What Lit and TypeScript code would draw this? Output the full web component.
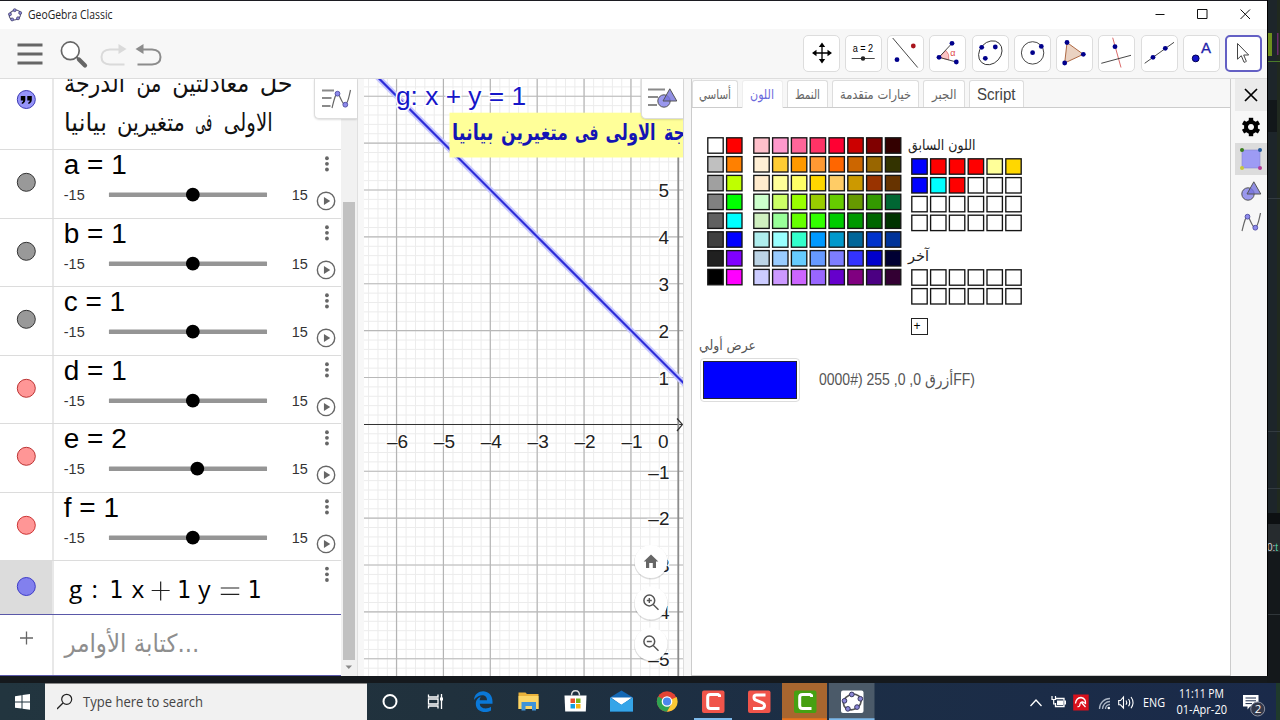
import { LitElement, html, svg, css } from "lit";
import { customElement } from "lit/decorators.js";

const AR = "'DejaVu Sans', sans-serif";
const SEG = "'Open Sans', 'Noto Sans', sans-serif";
const ARIAL = "'Liberation Sans', 'DejaVu Sans', sans-serif";

// A line of text fitted to a known width.
const line = (t: string, w: number, h: number, base: number, size: number, fill = "#000", font = AR, weight = 400) => html`
  <svg class="ln" width=${w} height=${h}><text x="0" y=${base} textLength=${w} lengthAdjust="spacingAndGlyphs"
    font-family=${font} font-size=${size} font-weight=${weight} fill=${fill}>${t}</text></svg>`;

const word = (t: string, x: number, y: number, w: number, size: number, fill: string, weight = 400) => svg`
  <text x=${x} y=${y} textLength=${w} lengthAdjust="spacingAndGlyphs" font-family=${AR} font-size=${size} font-weight=${weight} fill=${fill}>${t}</text>`;

const dot = (x: number, y: number, r = 2.4, fill = "#00008b") => svg`<circle cx=${x} cy=${y} r=${r} fill=${fill}/>`;
const seg = (a: number, b: number, c: number, d: number, stroke = "#333", w = 0.9) => svg`<line x1=${a} y1=${b} x2=${c} y2=${d} stroke=${stroke} stroke-width=${w}/>`;

const pentagon = (s: number, ring: string) => svg`
  <g transform="scale(${s})"><ellipse cx="0" cy="0" rx="9.3" ry="7.6" transform="rotate(-25)" fill="none" stroke=${ring} stroke-width="1.7"/>
  ${[[-0.5, -7.7], [8.2, -3.3], [4.8, 5.2], [-4.5, 7], [-8, -1.2]].map(([x, y]) => svg`<circle cx=${x} cy=${y} r="2.4" fill="#8b86d6" stroke="#34345c" stroke-width="1"/>`)}</g>`;

const tools = [
  svg`<path d="M19 9V27M10.500 18H27.500" stroke="#000" stroke-width="1.300"/><path d="M19 7.500l3.200 4.500h-6.400zM19 28.500l3.200-4.500h-6.400zM9 18l4.500-3.200v6.400zM29 18l-4.500-3.200v6.400z"/>`,
  svg`<text x="7.700" y="17" font-size="11.500" textLength="20.500" lengthAdjust="spacingAndGlyphs" font-family=${ARIAL}>a = 2</text>${seg(6.7, 23.5, 29.7, 23.5)}${dot(18, 23.5, 2.2, "#222")}`,
  svg`${seg(5.7, 3, 30.7, 32.5)}${dot(10, 24.7)}${dot(26.3, 11, 2.4, "#a8141c")}`,
  svg`<path d="M10 22.300L17 15.500A10 10 0 0 1 19.700 24.800Z" fill="#fbc4c4" stroke="#d66" stroke-width=".7"/>${seg(10, 22.3, 23, 8.3)}${seg(10, 22.3, 27.3, 27)}${dot(10, 22.3)}${dot(23, 8.3)}${dot(27.3, 27)}<text x="21.300" y="21" font-size="9" fill="#e04848" font-family=${ARIAL}>α</text>`,
  svg`<ellipse cx="18.300" cy="17.800" rx="13" ry="10.600" transform="rotate(-48 18.300 17.800)" fill="none" stroke="#333" stroke-width=".9"/>${dot(9.7, 12.3)}${dot(23.3, 12)}${dot(13.3, 23.3)}`,
  svg`<circle cx="18.600" cy="17.900" r="11.200" fill="none" stroke="#333" stroke-width=".9"/>${dot(18.6, 17.7)}${dot(27.3, 11.4)}`,
  svg`<path d="M11 7.500L27.300 19.300L8.700 28Z" fill="#ead2c2" stroke="#a55a32" stroke-width=".9"/>${dot(11, 7.5)}${dot(27.3, 19.3)}${dot(8.7, 28)}`,
  svg`${seg(14.7, 2.7, 23, 32.5, "#d65a5a")}${seg(3.3, 28.3, 33, 20.3)}${dot(17, 11.7)}`,
  svg`${seg(3.7, 28.3, 33, 7.3)}${dot(12, 22.3)}${dot(24.3, 13.3)}`,
  svg`<circle cx="12.700" cy="23.400" r="3.400" fill="#1414c8" stroke="#000050"/><text x="18" y="17.500" font-size="15" fill="#2222aa" stroke="#2222aa" stroke-width=".3" font-family=${ARIAL}>A</text>`,
  svg`<path d="M12.500 8.500V24.200L16.300 20.700L19 27.200Q20.700 27.500 21.300 26.200L18.700 20H23.700Z" fill="#fff" stroke="#444" stroke-width="1" stroke-linejoin="round"/>`,
];

const shapes = svg`<circle cx="7" cy="13" r="6.200" fill="#9a98ee" stroke="#555" stroke-width="1"/><path d="M12.800 .8L19.800 13H6Z" fill="#7673dc" fill-opacity=".8" stroke="#555" stroke-width="1"/>`;
const curve = svg`<path d="M1 18C3.500 8 4.500 3.500 6.500 3.500S11 14.500 14 14.500S18 6 19.500 0" fill="none" stroke="#666" stroke-width="1.200"/><circle cx="6.500" cy="3.700" r="2.400" fill="#8d8aec" stroke="#4d4ba0" stroke-width=".9"/><circle cx="14.300" cy="14.700" r="2.400" fill="#8d8aec" stroke="#4d4ba0" stroke-width=".9"/>`;
const bars = svg`<path d="M0 1.500H12M0 9H9.500M0 17H8.500" stroke="#8a8a8a" stroke-width="1.900"/>`;
const barsWide = svg`<path d="M0 1.500H17M0 9H10M0 17H9" stroke="#8a8a8a" stroke-width="1.900"/>`;

const sliders = [
  ["a = 1", 193, "#999", "#333"], ["b = 1", 193, "#999", "#333"], ["c = 1", 193, "#999", "#333"],
  ["d = 1", 193, "#ff9696", "#b33"], ["e = 2", 197.5, "#ff9696", "#b33"], ["f = 1", 193, "#ff9696", "#c33"],
] as [string, number, string, string][];

const base = "fff f00 c0c0c0 ff8000 a0a0a0 bfff00 808080 0f0 606060 0ff 404040 00f 202020 8000ff 000 f0f".split(" ");
const palette = ("ffc0cb ff99cc ff6699 ff3366 ff0033 cc0000 800000 330000 ffefd5 ffcc33 ff9900 ff9933 ff6600 cc6600 996600 333300 " +
  "ffebcd ffff99 ffff66 ffd700 ffcc66 cc9900 993300 663300 ccffcc ccff66 99ff00 99cc00 66cc00 669900 339900 006633 " +
  "d0f0c0 99ff99 66ff00 33ff00 00cc00 009900 006600 003300 afeeee 99ffff 33ffcc 0099ff 0099cc 006699 0033cc 003399 " +
  "bcd4e6 99ccff 66ccff 6699ff 7d7dff 3333ff 0000cc 000033 ccccff cc99ff cc66ff 9966ff 6600cc 800080 4b0082 330033").split(" ");
const recent = "00f f00 f00 f00 ffff99 ffd700 00f 0ff f00".split(" ").concat(Array(15).fill("fff"));
const others = Array(12).fill("fff");

const swatches = (c: string[], cols: number) => {
  const rows = c.length / cols;
  return html`<svg class="ln" width=${cols * 18.8} height=${rows * 18.8}>${c.map((v, i) => svg`
    <rect x=${(i % cols) * 18.8 + 0.8} y=${Math.floor(i / cols) * 18.8 + 0.8} width="15.400" height="15.400" fill=${"#" + v} stroke="#151515" stroke-width="1.350"/>`)}</svg>`;
};

const range = (a: number, b: number) => Array.from({ length: b - a + 1 }, (_, i) => a + i);
const X0 = 678, Y0 = 424.4, U = 46.88;

const taskIcons = [
  svg`<circle cx="23" cy="18.500" r="6.500" fill="none" stroke="#fff" stroke-width="2"/>`,
  svg`<path d="M15.500 11.500V14H25V11.500M15.500 25.500V23H25V25.500M15.500 16H25V21H15.500ZM28.500 11V26" fill="none" stroke="#fff" stroke-width="1.300"/><rect x="27" y="14.500" width="3" height="3" fill="#fff"/>`,
  svg`<path d="M15 17C16 5 33.500 5.500 33.500 18.500V20.800H20.800C21.200 26.500 28.500 26.300 32 23.800V27.500C26 31 16.500 28.500 16.800 20.500C17 16.500 19.500 14.500 22 13.500C20.900 15 20.700 16.500 20.700 17.300H28C28.300 10.500 19.500 10.500 15 17Z" fill="#0a78d8"/>`,
  svg`<path d="M13.500 9.500h7l1.500 1.500H33.500V26H13.500Z" fill="#e9b23b"/><path d="M13.500 13H33.500V26H13.500Z" fill="#fcd667"/><path d="M16.500 19H31V27.500H27V23H20.500V27.500H16.500Z" fill="#3f93d8"/>`,
  svg`<path d="M12.500 12.500H34.500L33.800 28.500H13.200Z" fill="#fff"/><path d="M19.500 12.500C19.500 6 27.500 6 27.500 12.500" fill="none" stroke="#ddd" stroke-width="1.500"/><path d="M18.500 15.500h4.500v4.500h-4.500z" fill="#e5502c"/><path d="M24 15.500h4.500v4.500H24z" fill="#7cb518"/><path d="M18.500 21h4.500v4.500h-4.500z" fill="#129fe4"/><path d="M24 21h4.500v4.500H24z" fill="#f7b50f"/>`,
  svg`<path d="M12 14.500L23.500 7.500L35 14.500V28.500H12Z" fill="#1267b4"/><path d="M13 14.500H34L23.500 22Z" fill="#fff"/><path d="M12 14.500L23.500 22L12 28.500ZM35 14.500V28.500H12L23.500 21.500Z" fill="#35a5e8"/>`,
  svg`<circle cx="23" cy="18.500" r="10.200" fill="#e34335"/><path d="M23 18.500L14.200 13.400A10.200 10.200 0 0 0 23 28.700L27.400 21Z" fill="#2ea452"/><path d="M23 18.500L32.600 14A10.200 10.200 0 0 1 23 28.700L27.400 21Z" fill="#fcc934"/><circle cx="23" cy="18.500" r="4.700" fill="#4b87ee" stroke="#fff" stroke-width="1.300"/>`,
  svg`<rect x="12" y="7.500" width="22.500" height="22.500" rx="2" fill="#f0544a"/><path d="M29.500 14V12.500L28 11.500H20.500Q17.700 11.500 17.700 14V22.500Q17.700 25.500 20.500 25.500H29.500" fill="none" stroke="#fff" stroke-width="3"/><path d="M4 36H42" stroke="#7db9ea" stroke-width="2"/>`,
  svg`<rect x="12" y="7.500" width="22.500" height="22.500" rx="2" fill="#f0544a"/><path d="M29.500 12H20.500Q18 12 18 14.200T20 17.200L26.500 19.900Q28.800 21 28.500 23T26 25.400H17" fill="none" stroke="#fff" stroke-width="3"/>`,
  svg`<rect x="0" y="0" width="45" height="37" fill="#a8662f"/><rect x="12" y="7.500" width="22.500" height="22.500" rx="2" fill="#46a012"/><path d="M29.500 14V12.500L28 11.500H20.500Q17.700 11.500 17.700 14V22.500Q17.700 25.500 20.500 25.500H29.500" fill="none" stroke="#fff" stroke-width="3"/><path d="M0 36.200H45" stroke="#e8731c" stroke-width="1.800"/>`,
  svg`<rect x="0" y="0" width="45.500" height="37" fill="#4b5a69"/><rect x="12" y="7.500" width="22.500" height="22.500" rx="2" fill="#fff"/><g transform="translate(23.300 19)">${pentagon(0.98, "#555")}</g><path d="M0 36.200H45.500" stroke="#7db9ea" stroke-width="1.800"/>`,
];

@customElement("app-root")
export class AppRoot extends LitElement {
  static styles = css`
    :host { display: block; width: 1280px; height: 720px; overflow: hidden; font-family: "Liberation Sans", "DejaVu Sans", sans-serif; }
    * { box-sizing: border-box; }
    svg { display: block; flex: none; }
    .ln { overflow: visible; }
    .desk { display: flex; flex-direction: column; height: 720px; background: #15191d; }
    .upper { display: flex; height: 683px; }
    .win { width: 1267px; height: 676px; display: flex; flex-direction: column; background: #f7f7f7; border-top: 1px solid #1c1c22; }
    .title { height: 28px; background: #fff; display: flex; align-items: center; padding-left: 7px; gap: 5px; }
    .title .grow, .bar .grow { flex: 1; }
    .bar { height: 50px; display: flex; align-items: center; border-bottom: 1px solid #ddd; padding-right: 5px; background: #f7f7f7; }
    .tools { display: flex; gap: 5.26px; }
    .tool { width: 37px; height: 37px; background: #fff; border: 1px solid #ddd; border-radius: 5px; }
    .tool svg { margin: -1px; }
    .tool.on { border: 2px solid #6460c4; }
    .tool.on svg { margin: -2px; }
    .work { flex: 1; display: flex; min-height: 0; }
    .alg { width: 341px; background: #fff; display: flex; flex-direction: column; overflow: hidden; }
    .row { display: flex; height: 68.5px; border-bottom: 1px solid #dcdcdc; flex: none; }
    .row.first { height: 71px; }
    .row.g { height: 53.800px; border-bottom: 1.500px solid #5a58a8; }
    .row.inp { flex: 1; border-bottom: 1px solid #5a58a8; }
    .mark { width: 54px; border-right: 2px solid #e8e8e8; flex: none; }
    .row.g .mark { background: #dcdcdc; }
    .cell { flex: 1; }
    .scroll { width: 17px; background: #f1f1f1; border-right: 1px solid #e0e0e0; position: relative; display: flex; flex-direction: column; align-items: center; padding-top: 123px; }
    .thumb { width: 12px; height: 458px; background: #c1c1c1; }
    .stylebtn { position: absolute; right: 0; top: 0; width: 43px; height: 40px; background: #fff; border: 1px solid #ddd; border-top: 0; border-right: 0; border-radius: 0 0 0 5px; box-shadow: 0 1px 2px #0002; padding: 9.500px 0 0 7px; }
    .graph { width: 320px; margin-left: 6px; background: #fff; border-right: 1px solid #ddd; position: relative; }
    .stylebtn.ge { width: 42px; padding: 9px 0 0 6px; }
    .panel { width: 541px; margin-left: 7px; border-left: 1px solid #ccc; border-right: 1px solid #ccc; border-bottom: 1px solid #ccc; background: #fff; display: flex; flex-direction: column; }
    .tabs { display: flex; gap: 4px; height: 29px; background: #f7f7f7; border-bottom: 1px solid #ccc; padding-top: 1px; flex: none; }
    .tab { height: 27px; background: #fff; border: 1px solid #ddd; border-bottom: 0; border-radius: 3px 3px 0 0; display: flex; justify-content: center; padding-top: 3.500px; }
    .tab.on { height: 28px; position: relative; border-color: #eee; }
    .colors { display: flex; padding: 29px 0 0 15px; }
    .colors .main { margin-left: 8.4px; }
    .side { margin-left: 5.400px; }
    .recent { padding-left: 2.400px; }
    .plus { width: 17px; height: 17px; border: 1.500px solid #222; margin: 12px 0 0 3px; font-size: 12px; line-height: 15px; padding-left: 1px; }
    .prevlab { padding: 1px 0 0 7px; }
    .prev { display: flex; align-items: center; padding: 2px 0 0 8px; gap: 19.500px; }
    .chip { width: 100px; height: 44px; border: 1px solid #ddd; border-radius: 4px; padding: 2px; background: #fff; }
    .chip div { height: 38px; background: #0000ff; border: 1px solid #223; }
    .views { width: 36px; display: flex; flex-direction: column; padding-left: 4px; }
    .view { width: 32px; height: 32px; display: flex; align-items: center; justify-content: center; }
    .view.dim { background: #ebebeb; }
    .view.sel { background: #dcdcdc; }
    .taskbar { height: 37px; display: flex; background: linear-gradient(90deg, #22353f 0, #20313d 35%, #1c2e45 62%, #1a2a4a 100%); }
    .start { width: 45px; }
    .search { width: 322px; background: #f1f1f1; border-top: 1px solid #888; display: flex; align-items: center; gap: 10px; padding-left: 12px; }
    .apps { display: flex; width: 508px; }
  `;

  row([name, x, fill, stroke]: [string, number, string, string]) {
    return html`<div class="row"><div class="mark"><svg width="52" height="67"><circle cx="26.300" cy="32.300" r="9" fill=${fill} stroke=${stroke} stroke-width="1"/></svg></div>
      <svg class="cell" width="287" height="67.500" viewBox="54 0 287 67.500" font-family=${ARIAL}>
        <text x="63.800" y="24" font-size="28">${name}</text>
        <text x="63.800" y="49.800" font-size="14.500" fill="#333">-15</text><text x="292" y="49.800" font-size="14.500" fill="#333">15</text>
        <rect x="109" y="42.400" width="158.300" height="4.700" rx=".5" fill="#959595"/><circle cx=${x} cy="44.700" r="6.900"/>
        ${[8.2, 13.8, 19.5].map((y) => svg`<circle cx="327.300" cy=${y} r="1.900" fill="#666"/>`)}
        <circle cx="326.400" cy="51" r="8.700" fill="#fff" stroke="#666" stroke-width="1.400"/><path d="M324.300 47L330.600 51L324.300 55Z" fill="#666"/>
      </svg></div>`;
  }

  graph() {
    const halo = (t: string, x: number, y: number, a = "end") => svg`<text x=${x} y=${y} text-anchor=${a} font-size="19" fill="#222" stroke="#fff" stroke-width="2.500" paint-order="stroke">${t}</text>`;
    return html`<svg width="319" height="597" viewBox="364 79 319 597" font-family=${ARIAL}>
      ${range(-33, 1).map((i) => seg(X0 + (i * U) / 5, 79, X0 + (i * U) / 5, 676, "#ececec", 1))}
      ${range(-26, 36).map((i) => seg(364, Y0 - (i * U) / 5, 683, Y0 - (i * U) / 5, "#ececec", 1))}
      ${range(-6, -1).map((i) => seg(X0 + i * U - 0.2, 79, X0 + i * U - 0.2, 676, "#b4b4b4", 1.2))}
      ${range(-5, 7).filter((i) => i).map((i) => seg(364, Y0 - i * U, 683, Y0 - i * U, "#b8b8b8", 1.1))}
      ${seg(364, 424.5, 682, 424.5, "#333", 1.1)}${seg(678.3, 120, 678.3, 676, "#8c8c8c", 1.8)}
      <path d="M677 418.500L682.500 424.500L677 431" fill="none" stroke="#333" stroke-width="1.200"/>
      ${range(-6, -1).map((i) => halo("–" + -i, X0 + i * U + 11.4, 448))}
      ${range(1, 5).map((i) => halo("" + i, 669, Y0 - i * U + 7))}
      ${range(-5, -1).map((i) => halo("–" + -i, 669.5, Y0 - i * U + 7.3))}
      ${halo("0", 668.5, 448)}
      <line x1="376.500" y1="76" x2="686" y2="385.500" stroke="#c6c6ff" stroke-width="6"/>
      <line x1="376.500" y1="76" x2="686" y2="385.500" stroke="#2d2dd8" stroke-width="2.200"/>
      <text x="396" y="105" font-size="26" textLength="130" lengthAdjust="spacingAndGlyphs" fill="#1616c8" stroke="#fff" stroke-width="3" paint-order="stroke">g: x + y = 1</text>
      <rect x="449.500" y="112.700" width="234" height="44.800" fill="#ffff99"/>
      ${word("بيانيا", 452, 139.5, 41.5, 22, "#1414b4", 700)}
      ${word("متغيرين", 501, 139.5, 67, 22, "#1414b4", 700)}
      ${word("فى", 575, 139.5, 23.5, 22, "#1414b4", 700)}
      ${word("الاولى", 605.5, 139.5, 50, 22, "#1414b4", 700)}
      ${word("جة", 664, 139.5, 21, 22, "#1414b4", 700)}
      ${[561.5, 603, 644].map((y) => svg`<circle cx="651" cy=${y + 1} r="17" fill="#0002"/><circle cx="651" cy=${y} r="16.500" fill="#fff"/>`)}
      <path d="M651 554.500L643.700 561.500H646V568H649.200V563H652.800V568H656V561.500H658.300Z" fill="#666"/>
      ${[600.5, 641.5].map((y, i) => svg`<circle cx="649.300" cy=${y} r="5.400" fill="none" stroke="#555" stroke-width="1.500"/><path d=${`M653.200 ${y + 4}L658.500 ${y + 9.3}M646.800 ${y}H651.800${i ? "" : `M649.300 ${y - 2.5}V${y + 2.5}`}`} stroke="#555" stroke-width="1.400"/>`)}
    </svg>`;
  }

  render() {
    const tabs: [string, number, number, number][] = [["أساسي", 46, 32, 0], ["اللون", 41.5, 24, 1], ["النمط", 40.5, 25, 0], ["خيارات متقدمة", 87.5, 71, 0], ["الجبر", 41.5, 24.5, 0]];
    return html`<div class="desk"><div class="upper"><div class="win">
      <div class="title">
        <svg width="16" height="16" viewBox="-8 -8 16 16">${pentagon(0.63, "#555577")}</svg>
        ${line("GeoGebra Classic", 84.5, 16, 12, 11.8, "#222", SEG)}
        <div class="grow"></div>
        <svg width="112" height="28" viewBox="1155 1 112 28" fill="none" stroke="#111"><path d="M1155.500 14.500H1164.500M1197.500 9.500H1207V18.500H1197.500ZM1240.500 9.500L1250 19M1250 9.500L1240.500 19"/></svg>
      </div>
      <div class="bar">
        <svg width="170" height="49" viewBox="0 29 170 49">
          <path d="M17.500 45H42.500M17.500 54H42.500M17.500 63H42.500" stroke="#666" stroke-width="2.800"/>
          <circle cx="70.300" cy="50.800" r="8.900" fill="#fff" stroke="#666" stroke-width="1.700"/><path d="M76.500 57L79.500 60" stroke="#666" stroke-width="1.800"/><path d="M79 59.500L85 65.500" stroke="#666" stroke-width="4.300" stroke-linecap="round"/>
          <path d="M124.500 64.500H110Q101.500 64 101.500 57T110 49.500H119" fill="none" stroke="#dadada" stroke-width="2"/><path d="M118.500 44L126.500 49L118.500 54Z" fill="#dadada"/>
          <path d="M137.500 64.500H152Q160.500 64 160.500 57T152 49.500H142" fill="none" stroke="#8c8c8c" stroke-width="2"/><path d="M143.500 44L135.500 49L143.500 54Z" fill="#8c8c8c"/>
        </svg>
        <div class="grow"></div>
        <div class="tools">${tools.map((t, i) => html`<div class="tool ${i === 10 ? "on" : ""}"><svg width="37" height="37">${t}</svg></div>`)}</div>
      </div>
      <div class="work">
        <div class="alg">
          <div class="row first"><div class="mark"><svg width="52" height="60"><circle cx="26.300" cy="20.500" r="9" fill="#9694fa" stroke="#3c3ab4"/>
            <path d="M20.800 17h4.500v4q-.3 3.200-3.500 4v-1.500q1.500-.6 1.500-2h-2.500zM27.300 17h4.500v4q-.3 3.200-3.500 4v-1.500q1.500-.6 1.500-2h-2.500z"/></svg></div>
            <svg class="cell" width="287" height="70" viewBox="54 79 287 70">
              ${word("حل", 260, 92, 33, 25, "#111")}${word("معادلتين", 172.5, 92, 77, 25, "#111")}${word("من", 136.5, 92, 25, 25, "#111")}${word("الدرجة", 64, 92, 61, 25, "#111")}
              ${word("الاولى", 224, 131, 49, 25, "#111")}${word("فى", 195.5, 131, 17, 25, "#111")}${word("متغيرين", 117, 131, 68, 25, "#111")}${word("بيانيا", 64, 131, 43, 25, "#111")}
            </svg></div>
          ${sliders.map((s) => this.row(s))}
          <div class="row g"><div class="mark"><svg width="52" height="52"><circle cx="26.300" cy="25.500" r="9" fill="#8280ee" stroke="#3c3ac8"/></svg></div>
            <svg class="cell" width="287" height="52" viewBox="54 561 287 52">
              <g font-family="'DejaVu Sans Condensed','DejaVu Sans'" font-size="24.500"><text x="109.500" y="598" textLength="14" lengthAdjust="spacingAndGlyphs">1</text><text x="177.500" y="598" textLength="14" lengthAdjust="spacingAndGlyphs">1</text><text x="248" y="598" textLength="14" lengthAdjust="spacingAndGlyphs">1</text></g>
              <g font-family=${SEG} font-size="24.500"><text x="69" y="598">g</text><text x="91.500" y="598">:</text><text x="131.500" y="598">x</text><text x="198.500" y="598">y</text></g>
              <path d="M151.800 590.500H169.800M160.800 581.500V600.500M221 588H239.500M221 594.300H239.500" stroke="#222" stroke-width="1.200"/>
              ${[568.5, 574.3, 580].map((y) => svg`<circle cx="327.300" cy=${y} r="1.900" fill="#666"/>`)}
            </svg></div>
          <div class="row inp"><div class="mark"><svg width="52" height="50"><path d="M20 23H33M26.500 16.500V29.500" stroke="#666" stroke-width="1.300"/></svg></div>
            <svg class="cell" width="287" height="58" viewBox="54 615 287 58">${word("كتابة الأوامر...", 64.5, 652, 135, 25, "#8e8e8e")}</svg></div>
        </div>
        <div class="scroll"><div class="thumb"></div><svg width="15" height="15"><path d="M4.500 5.500H11L7.800 9Z" fill="#888"/></svg>
          <div class="stylebtn"><svg width="34" height="22">${bars}<g transform="translate(9 1)">${curve}</g></svg></div></div>
        <div class="graph">${this.graph()}<div class="stylebtn ge"><svg width="34" height="22">${barsWide}<g transform="translate(9 0)">${shapes}</g></svg></div></div>
        <div class="panel">
          <div class="tabs">${tabs.map(([t, w, tw, on]) => html`<div class="tab ${on ? "on" : ""}" style="width:${w}px">${line(t, tw, 20, 13.5, 13.5, on ? "#6b69dc" : "#666")}</div>`)}
            <div class="tab" style="width:55.5px">${line("Script", 38.5, 20, 14.5, 16, "#444", ARIAL)}</div></div>
          <div class="colors">${swatches(base, 2)}<div class="main">${swatches(palette, 8)}</div>
            <div class="side">${line("اللون السابق", 67.5, 21, 12.5, 14.5, "#222")}<div class="recent">${swatches(recent, 6)}</div>
              ${line("آخر", 21, 35.5, 28, 14.5, "#222")}<div class="recent">${swatches(others, 6)}</div><div class="plus">+</div></div></div>
          <div class="prevlab">${line("عرض أولي", 57, 20, 14, 14, "#555")}</div>
          <div class="prev"><div class="chip"><div></div></div>${line("0000#) 255 ,0 ,0 أزرقFF)", 156, 20, 15, 16, "#555", ARIAL)}</div>
        </div>
        <div class="views">
          <div class="view dim"><svg width="14" height="14"><path d="M1 1L13 13M13 1L1 13" stroke="#000" stroke-width="1.700"/></svg></div>
          <div class="view"><svg width="20" height="20" viewBox="-10 -10 20 20">${range(0, 5).map((i) => svg`<rect x="-2.200" y="-9.200" width="4.400" height="6" transform="rotate(${i * 60})"/>`)}<circle r="5" fill="none" stroke="#000" stroke-width="4"/></svg></div>
          <div class="view sel"><svg width="22" height="22"><rect x="2" y="2" width="18" height="18" fill="#9d9bf4" stroke="#8886d0" stroke-width=".6"/>${dot(2, 2, 2, "#3a7d1e")}${dot(20, 2, 2, "#245a9c")}${dot(2, 20, 2, "#c8c83c")}${dot(20, 20, 2, "#b43c96")}</svg></div>
          <div class="view"><svg width="21" height="20">${shapes}</svg></div>
          <div class="view"><svg width="21" height="20">${curve}</svg></div>
        </div>
      </div></div>
      <svg width="13" height="683" viewBox="1267 0 13 683">
        <rect x="1267" width="13" height="683" fill="#1d252a"/><rect x="1267" y="100" width="13" height="32" fill="#12171a"/><rect x="1277" width="3" height="683" fill="#20291f"/>
        <rect x="1267" y="33" width="5" height="23" fill="#6e8f1e"/><rect x="1277" y="33" width="1.500" height="22" fill="#6b2a6b"/>
        <path d="M1267 61.500H1280" stroke="#4a7a2a"/><path d="M1267 198.500H1280M1267 431.500H1280M1267 488.500H1280" stroke="#333b40"/>
        <rect x="1267" y="513" width="13" height="11" fill="#0d1012"/><rect x="1267" y="524" width="13" height="28" fill="#262b2e"/><rect x="1267" y="552" width="13" height="131" fill="#14181b"/><path d="M1267 614.500H1280" stroke="#30363a"/>
        <text x="1267" y="551" font-size="10" font-family=${ARIAL} fill="#ccc">0:<tspan fill="#4fc9a5">t</tspan></text><path d="M1267.500 0V676" stroke="#000"/>
      </svg></div>
      <div class="taskbar">
        <svg class="start" width="45" height="37"><path d="M15 13.200L21.500 12.300V18.400H15ZM22.500 12.100L30 11V18.400H22.500ZM15 19.400H21.500V25.600L15 24.700ZM22.500 19.400H30V26.800L22.500 25.800Z" fill="#fff"/></svg>
        <div class="search"><svg width="16" height="18"><circle cx="9.700" cy="6.300" r="5" fill="none" stroke="#222" stroke-width="1.200"/><path d="M6 10L0 16" stroke="#222" stroke-width="1.300"/></svg>${line("Type here to search", 120, 18, 14, 14, "#444", SEG)}</div>
        <div class="apps">${taskIcons.map((t) => html`<svg width="46.170" height="37">${t}</svg>`)}</div>
        <svg width="405" height="37" viewBox="875 683 405 37" font-family=${SEG} fill="#fff">
          <path d="M1030.500 706L1036 700L1041.500 706" fill="none" stroke="#fff" stroke-width="1.300"/>
          <path d="M1055.500 698.500H1064V706.500H1055.500V703" fill="none" stroke="#fff" stroke-width="1.300"/><rect x="1057" y="700.500" width="6" height="4.500"/><rect x="1064.500" y="700.500" width="1.500" height="4"/><path d="M1052 696V699.500H1055.500V696M1053.700 699.500V704H1056" fill="none" stroke="#fff" stroke-width="1.200"/>
          <rect x="1073.200" y="694.500" width="15.500" height="16" fill="#d8101c"/><path d="M1075.500 703.500Q1076 698 1081 697.500Q1086 698.500 1085.500 703.500L1083 702Q1080.500 701.500 1080 704Q1080 707 1077.500 706.500M1081 702L1085.500 707" fill="none" stroke="#fff" stroke-width="1.300"/>
          <g fill="none" stroke="#aab4c4" stroke-width="1.300"><path d="M1099.500 709A10.500 10.500 0 0 1 1110 698.500M1102.500 709A7.500 7.500 0 0 1 1110 701.500M1105.500 709A4.500 4.500 0 0 1 1110 704.500"/></g><circle cx="1108.800" cy="708" r="1.300"/>
          <path d="M1118.700 700.500H1120.500L1123.500 697V708L1120.500 704.800H1118.700ZM1126 700.500Q1127.500 702.500 1126 704.800M1128.500 699Q1131 702.500 1128.500 706.300M1131 697Q1135 702.500 1131 708.300" fill="none" stroke="#fff" stroke-width="1.100"/>
          <text x="1143" y="706.500" font-size="12" textLength="22" lengthAdjust="spacingAndGlyphs">ENG</text>
          <text x="1179" y="697.500" font-size="12" textLength="45" lengthAdjust="spacingAndGlyphs">11:11 PM</text>
          <text x="1176.500" y="714.300" font-size="12" textLength="50.500" lengthAdjust="spacingAndGlyphs">01-Apr-20</text>
          <path d="M1243 695H1258.500V706.500H1250L1247.500 709.500V706.500H1243Z"/><path d="M1245.500 698H1256M1245.500 700.800H1256M1245.500 703.600H1252" stroke="#1a2a4a"/>
          <circle cx="1257.700" cy="709" r="7" fill="#33384a" stroke="#8a90a0"/><text x="1254.700" y="713.300" font-size="11.500">2</text>
          <rect x="1276" y="683" width="4" height="37" fill="#1f3a2c"/>
        </svg>
      </div></div>`;
  }
}
